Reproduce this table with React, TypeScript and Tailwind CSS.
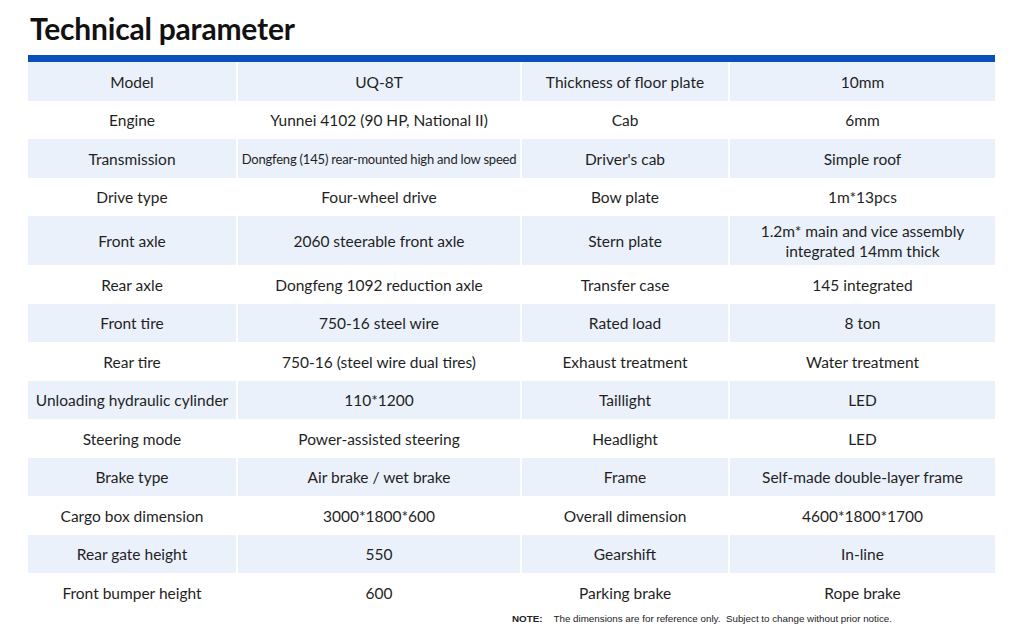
import React from 'react';

type Row = {
  label: string;
  value: string;
  label2: string;
  value2: string;
  tall?: boolean;
  small?: boolean;
};

const rows: Row[] = [
  { label: 'Model', value: 'UQ-8T', label2: 'Thickness of floor plate', value2: '10mm' },
  { label: 'Engine', value: 'Yunnei 4102 (90 HP, National II)', label2: 'Cab', value2: '6mm' },
  {
    label: 'Transmission',
    value: 'Dongfeng (145) rear-mounted high and low speed',
    label2: "Driver's cab",
    value2: 'Simple roof',
    small: true,
  },
  { label: 'Drive type', value: 'Four-wheel drive', label2: 'Bow plate', value2: '1m*13pcs' },
  {
    label: 'Front axle',
    value: '2060 steerable front axle',
    label2: 'Stern plate',
    value2: '1.2m* main and vice assembly integrated 14mm thick',
    tall: true,
  },
  { label: 'Rear axle', value: 'Dongfeng 1092 reduction axle', label2: 'Transfer case', value2: '145 integrated' },
  { label: 'Front tire', value: '750-16 steel wire', label2: 'Rated load', value2: '8 ton' },
  { label: 'Rear tire', value: '750-16 (steel wire dual tires)', label2: 'Exhaust treatment', value2: 'Water treatment' },
  { label: 'Unloading hydraulic cylinder', value: '110*1200', label2: 'Taillight', value2: 'LED' },
  { label: 'Steering mode', value: 'Power-assisted steering', label2: 'Headlight', value2: 'LED' },
  { label: 'Brake type', value: 'Air brake / wet brake', label2: 'Frame', value2: 'Self-made double-layer frame' },
  { label: 'Cargo box dimension', value: '3000*1800*600', label2: 'Overall dimension', value2: '4600*1800*1700' },
  { label: 'Rear gate height', value: '550', label2: 'Gearshift', value2: 'In-line' },
  { label: 'Front bumper height', value: '600', label2: 'Parking brake', value2: 'Rope brake' },
];

function Cell({ children, shaded, className = '' }: { children: React.ReactNode; shaded: boolean; className?: string }) {
  return (
    <div
      className={`flex items-center justify-center pt-[2px] text-center leading-[1.25] ${
        shaded ? 'bg-[#eaf1fb]' : 'bg-white'
      } ${className}`}
    >
      {children}
    </div>
  );
}

export default function App() {
  return (
    <div
      className="w-[1024px] h-[632px] bg-white text-[#1f1f1f] overflow-hidden"
      style={{ fontFamily: 'Lato, "Noto Sans", sans-serif' }}
    >
      <h1 className="pl-[30px] pt-[9px] text-[30px] font-bold leading-[38px] text-[#111] tracking-[-0.2px]">
        Technical parameter
      </h1>
      <div className="ml-[28px] mt-[8px] w-[967px]">
        <div className="h-[7px] bg-[#0a50bb]" />
        <div className="grid grid-cols-[208px_282px_206px_265px] gap-x-[2px] text-[15.5px]">
          {rows.map((r, i) => {
            const shaded = i % 2 === 0;
            const h = r.tall ? 'h-[49px]' : 'h-[38.5px]';
            return (
              <React.Fragment key={r.label}>
                <Cell shaded={shaded} className={h}>
                  {r.label}
                </Cell>
                <Cell shaded={shaded} className={h}>
                  {r.small ? (
                    <span className="text-[13px] tracking-[-0.2px] whitespace-nowrap">{r.value}</span>
                  ) : (
                    r.value
                  )}
                </Cell>
                <Cell shaded={shaded} className={h}>
                  {r.label2}
                </Cell>
                <Cell shaded={shaded} className={`${h} px-[20px]`}>
                  {r.value2}
                </Cell>
              </React.Fragment>
            );
          })}
        </div>
      </div>
      <p
        className="mt-[1px] ml-[512px] text-[9.8px] leading-[12px] text-[#222]"
        style={{ fontFamily: '"Liberation Sans", Arial, sans-serif' }}
      >
        <span className="font-bold mr-[11px]">NOTE:</span>
        The dimensions are for reference only.&nbsp; Subject to change without prior notice.
      </p>
    </div>
  );
}
